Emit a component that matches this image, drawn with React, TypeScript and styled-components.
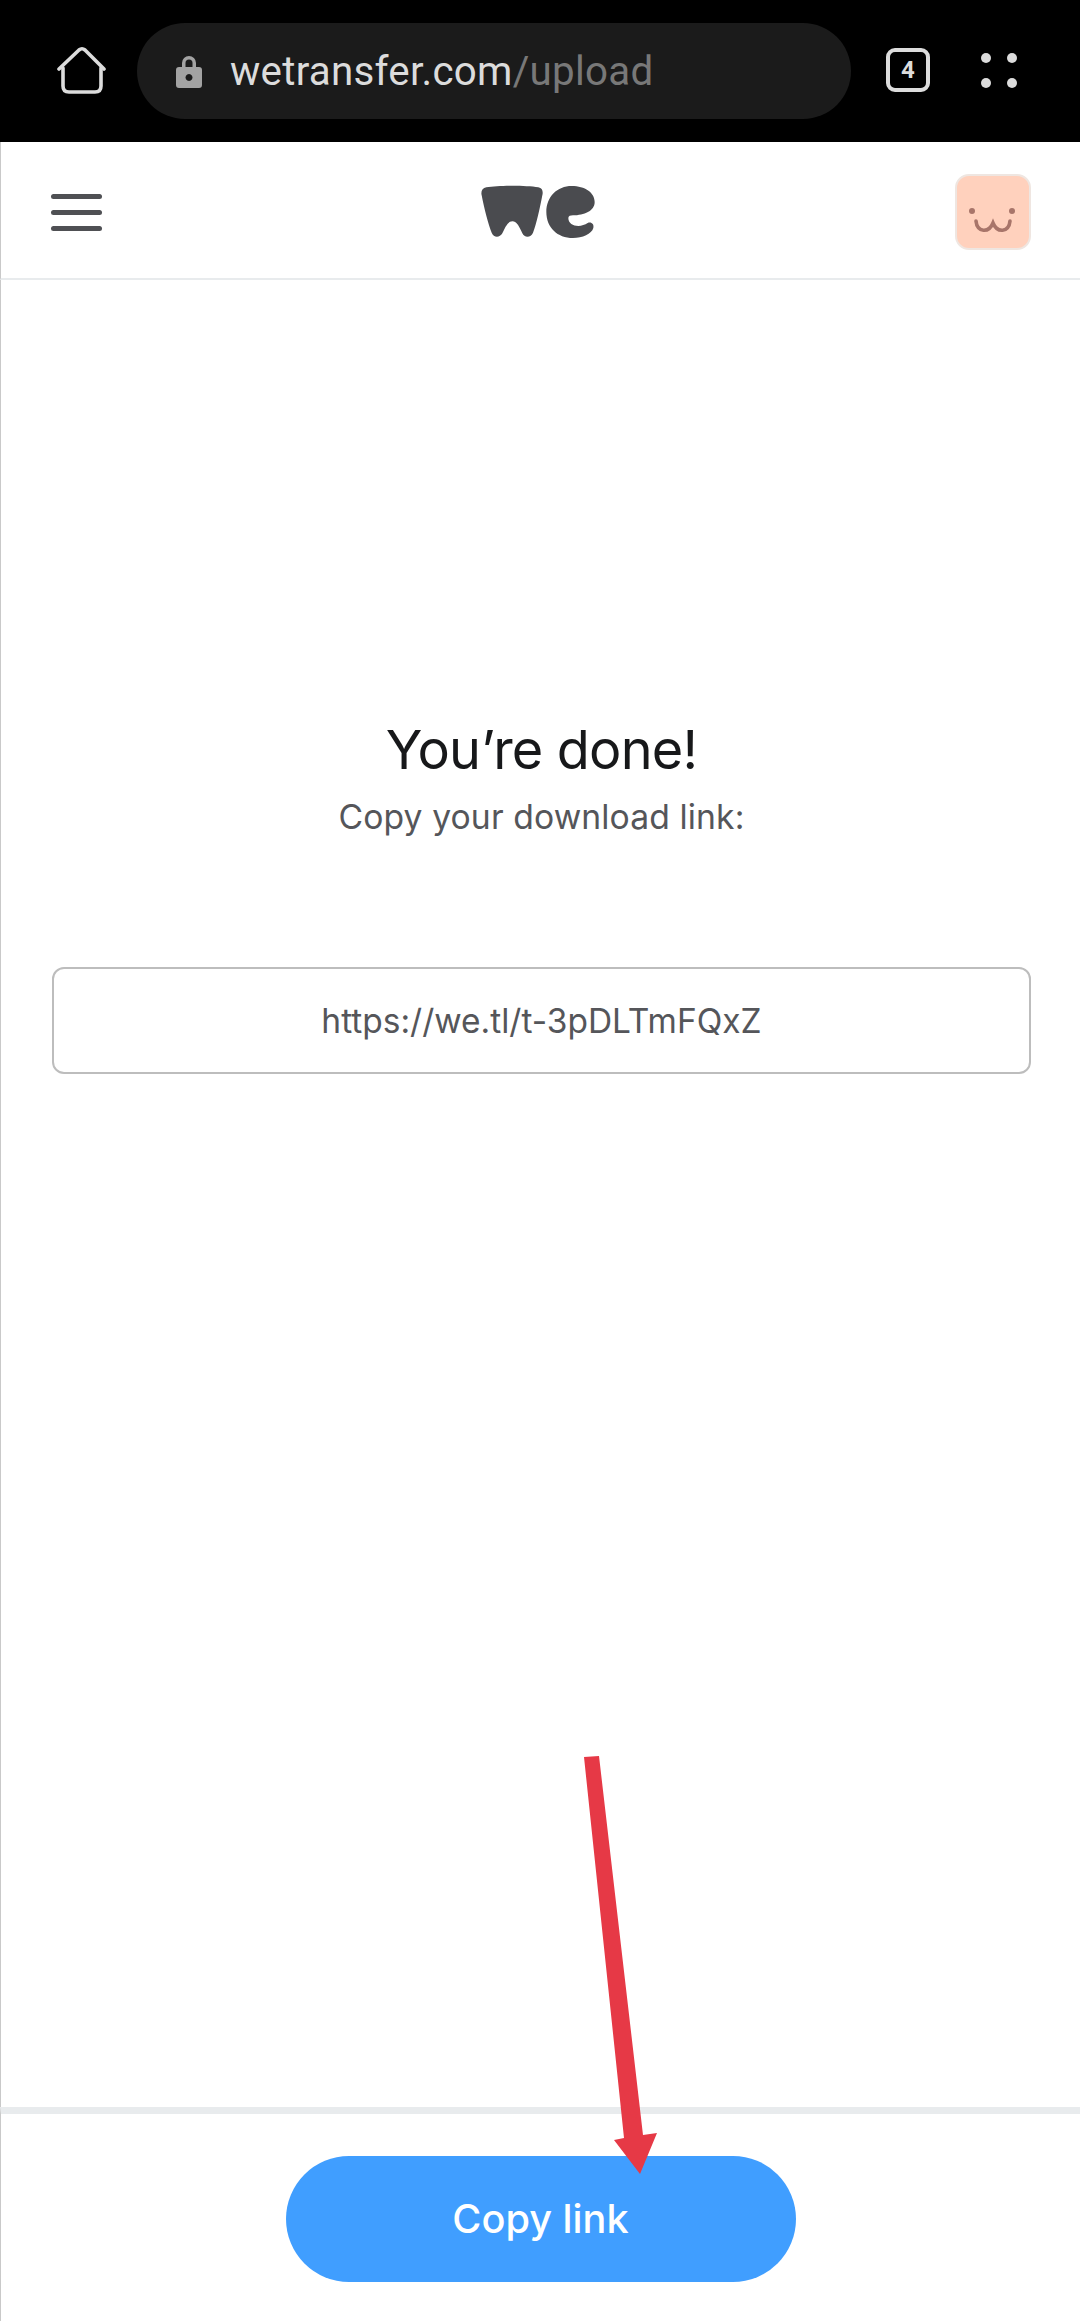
import React from "react";
import styled, { createGlobalStyle } from "styled-components";

const Global = createGlobalStyle`
  html, body { margin: 0; padding: 0; background: #fff; }
  * { box-sizing: border-box; }
  #root { width: 1080px; height: 2321px; }
`;

const Page = styled.div`
  position: relative;
  width: 1080px;
  height: 2321px;
  display: flex;
  flex-direction: column;
  background: #fff;
  overflow: hidden;
  font-family: Inter, "Liberation Sans", sans-serif;
`;

const BrowserBar = styled.div`
  height: 142px;
  flex: none;
  background: #000;
  display: flex;
  align-items: flex-start;
  padding: 23px 0 0 57px;
`;

const HomeIcon = styled.svg`
  width: 50px;
  height: 50px;
  margin-top: 23px;
  flex: none;
`;

const AddressPill = styled.div`
  width: 714px;
  height: 96px;
  margin-left: 30px;
  flex: none;
  border-radius: 48px;
  background: #1b1b1b;
  display: flex;
  align-items: center;
  padding-left: 39px;
  font-family: Roboto, sans-serif;
  font-size: 40.3px;
  letter-spacing: 0.27px;
`;

const LockIcon = styled.svg`
  width: 26px;
  height: 34px;
  flex: none;
  margin-right: 28px;
`;

const Domain = styled.span`
  color: #dcdcdc;
`;

const UrlPath = styled.span`
  color: #787878;
`;

const TabCount = styled.div`
  width: 44px;
  height: 44px;
  margin: 25px 0 0 35px;
  flex: none;
  border: 4px solid #dcdcdc;
  border-radius: 9px;
  display: flex;
  align-items: center;
  justify-content: center;
  color: #dcdcdc;
  font-family: Roboto, sans-serif;
  font-weight: 700;
  font-size: 24px;
`;

const MenuDots = styled.div`
  margin: 30px 0 0 51px;
  display: grid;
  grid-template-columns: 10px 10px;
  gap: 15px 16px;
`;

const Dot = styled.span`
  width: 10px;
  height: 10px;
  border-radius: 50%;
  background: #dcdcdc;
`;

const SiteHeader = styled.header`
  height: 138px;
  flex: none;
  display: flex;
  align-items: center;
  justify-content: space-between;
  padding: 0 49px 0 50px;
  border-bottom: 2px solid #e8ebed;
  border-left: 1px solid #c9c9c9;
`;

const Hamburger = styled.div`
  width: 51px;
  display: flex;
  flex-direction: column;
  gap: 11px;
  margin-top: 4px;
`;

const HamburgerBar = styled.span`
  height: 5px;
  border-radius: 3px;
  background: #4f5054;
`;

const Logo = styled.svg`
  width: 114px;
  height: 54px;
  margin-left: 18px;
  margin-top: 3px;
  flex: none;
`;

const Avatar = styled.svg`
  width: 76px;
  height: 76px;
  margin-top: 4px;
  flex: none;
`;

const Main = styled.main`
  flex: 1;
  display: flex;
  flex-direction: column;
  align-items: center;
  padding: 438px 49px 0 51px;
  border-left: 1px solid #c9c9c9;
`;

const Title = styled.h1`
  margin: 0;
  font-weight: 400;
  font-size: 54px;
  line-height: 64px;
  letter-spacing: -0.8px;
  color: #17181a;
`;

const Subtitle = styled.p`
  margin: 13px 0 0;
  font-size: 33.7px;
  line-height: 44px;
  letter-spacing: 0.1px;
  color: #55565a;
`;

const LinkField = styled.div`
  width: 100%;
  height: 107px;
  margin-top: 128px;
  border: 2px solid #bdbdbd;
  border-radius: 12px;
  display: flex;
  align-items: center;
  justify-content: center;
  font-size: 33.5px;
  color: #55565a;
`;

const Footer = styled.footer`
  height: 214px;
  flex: none;
  border-top: 7px solid #e8ebed;
  border-left: 1px solid #c9c9c9;
  display: flex;
  justify-content: center;
  padding: 42px 0 0 0;
`;

const CopyButton = styled.button`
  width: 510px;
  height: 126px;
  border: 0;
  border-radius: 63px;
  background: #409eff;
  color: #fff;
  font-family: Inter, "Liberation Sans", sans-serif;
  font-size: 39.7px;
  font-weight: 500;
  padding: 0;
`;

const Annotation = styled.svg`
  position: absolute;
  left: 0;
  top: 0;
  pointer-events: none;
`;

export default function App() {
  return (
    <Page>
      <Global />
      <BrowserBar>
        <HomeIcon viewBox="0 0 50 50" fill="none" stroke="#dcdcdc" strokeWidth="3.6" strokeLinecap="round" strokeLinejoin="round">
          <path d="M2 23 L22 4 Q25 1.5 28 4 L47 23" />
          <path d="M6 22 V40 Q6 46 12 46 H38 Q44 46 44 40 V22" />
        </HomeIcon>
        <AddressPill>
          <LockIcon viewBox="0 0 26 34">
            <path fill="#a3a3a3" fillRule="evenodd" d="M6 13 V9 a7 7 0 0 1 14 0 V13 h3 q3 0 3 3 V31 q0 3 -3 3 H3 q-3 0 -3 -3 V16 q0 -3 3 -3 Z M9.5 13 H16.5 V9 a3.5 3.5 0 0 0 -7 0 Z M13 20 a3.5 3.5 0 1 0 0.01 0 Z" />
          </LockIcon>
          <Domain>wetransfer.com</Domain>
          <UrlPath>/upload</UrlPath>
        </AddressPill>
        <TabCount>4</TabCount>
        <MenuDots>
          <Dot />
          <Dot />
          <Dot />
          <Dot />
        </MenuDots>
      </BrowserBar>
      <SiteHeader>
        <Hamburger>
          <HamburgerBar />
          <HamburgerBar />
          <HamburgerBar />
        </Hamburger>
        <Logo viewBox="96 78 342 160">
          <path fill="#4a4b4f" d="M112 84 C150 78 230 78 268 84 C280 86 283 96 280 108 C272 150 262 195 252 220 C246 236 226 236 220 222 C212 205 204 186 190 186 C176 186 168 205 160 222 C152 236 134 236 128 220 C118 195 106 150 98 108 C95 96 100 86 112 84Z" />
          <path fill="#4a4b4f" d="M368 80 C408 80 437 100 437 128 C437 155 405 168 372 168 C364 168 358 170 358 176 C358 192 372 200 388 200 C398 200 408 196 416 191 C426 186 436 194 433 206 C428 224 400 236 372 236 C325 236 292 205 292 158 C292 112 325 80 368 80Z" />
        </Logo>
        <Avatar viewBox="0 0 76 76">
          <rect x="1" y="1" width="74" height="74" rx="13" fill="#ffd1bd" stroke="#efe6e1" strokeWidth="2" />
          <circle cx="17" cy="37" r="3" fill="#a8756a" />
          <circle cx="57" cy="37" r="3" fill="#a8756a" />
          <path d="M21 47 C22 59 34 59 38 49 C42 59 54 59 55 47" fill="none" stroke="#a8756a" strokeWidth="3.6" strokeLinecap="round" />
        </Avatar>
      </SiteHeader>
      <Main>
        <Title>You’re done!</Title>
        <Subtitle>Copy your download link:</Subtitle>
        <LinkField>https://we.tl/t-3pDLTmFQxZ</LinkField>
      </Main>
      <Footer>
        <CopyButton>Copy link</CopyButton>
      </Footer>
      <Annotation width="1080" height="2321" viewBox="0 0 1080 2321">
        <path fill="#e63946" d="M584 1757 L599 1756 L643 2135 L657 2133 L640 2174 L614 2140 L624 2138 Z" />
      </Annotation>
    </Page>
  );
}
